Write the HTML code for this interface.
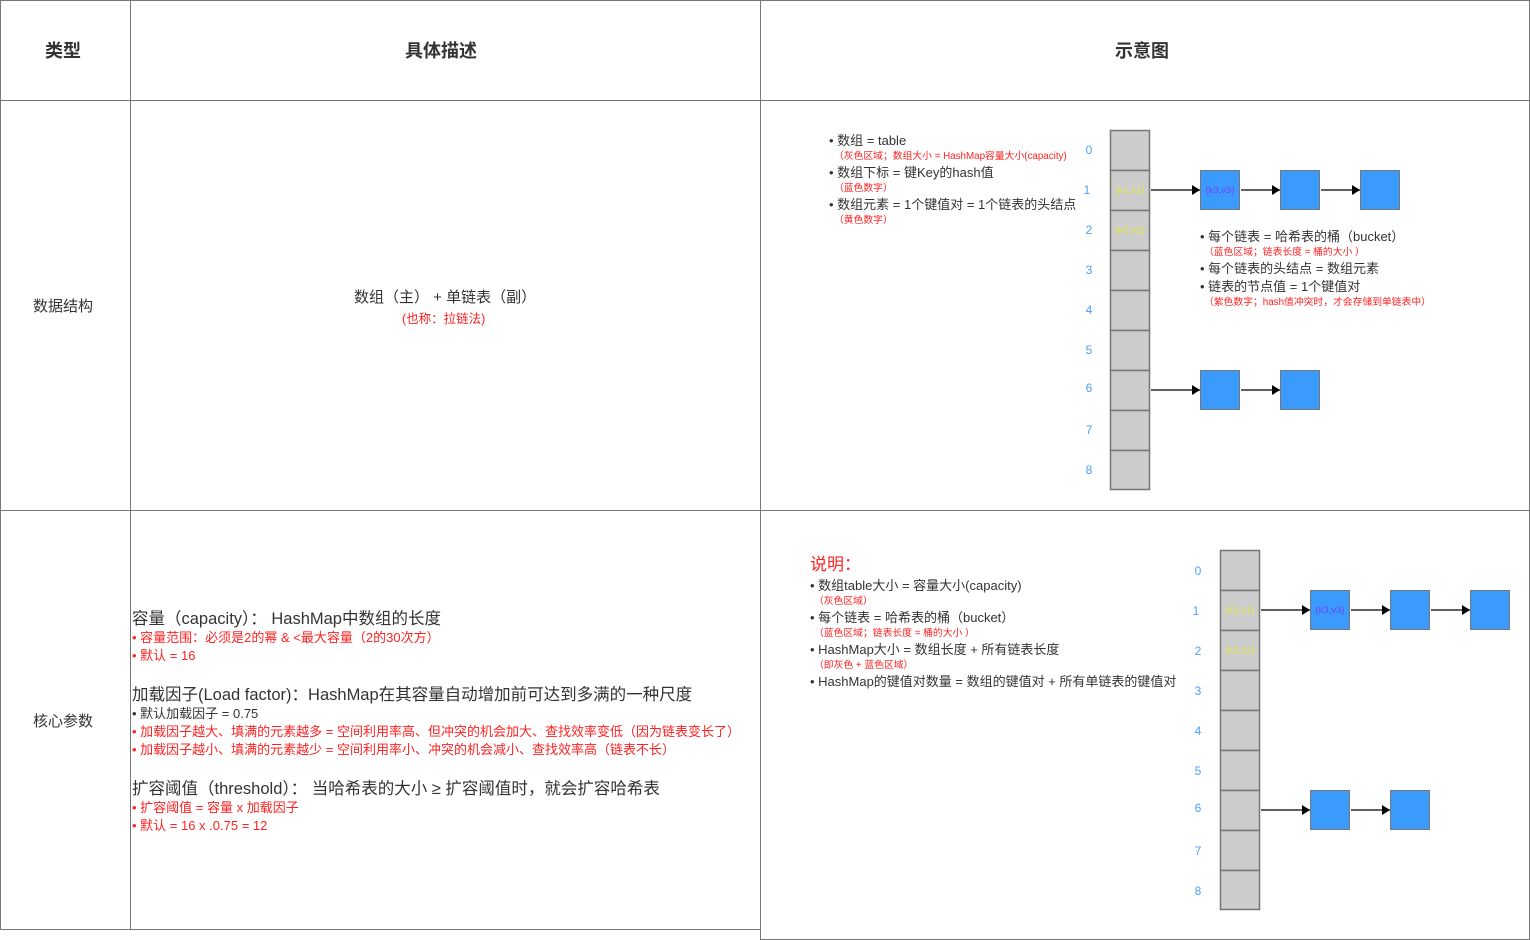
<!DOCTYPE html>
<html><head><meta charset="utf-8"><style>
*{margin:0;padding:0;box-sizing:border-box}
body{width:1530px;height:940px;background:#fff;position:relative;overflow:hidden;font-family:"Liberation Sans","Noto Sans CJK SC",sans-serif;color:#222}
.c{position:absolute;border:1px solid #777}
.t{position:absolute;white-space:nowrap}
.h{font-size:18px;font-weight:bold;color:#333}
.r{color:#f22}
.s{font-size:13px;color:#333}
.x{font-size:9.8px;color:#f22}
.b{font-size:15px;color:#333}
.m{font-size:13px}
.L{font-size:16.5px;color:#333}
</style></head><body>
<div class="c" style="left:0;top:0;width:131px;height:101px"></div>
<div class="c" style="left:130px;top:0;width:631px;height:101px"></div>
<div class="c" style="left:760px;top:0;width:770px;height:101px"></div>
<div class="c" style="left:0;top:100px;width:131px;height:411px"></div>
<div class="c" style="left:130px;top:100px;width:631px;height:411px"></div>
<div class="c" style="left:760px;top:100px;width:770px;height:411px"></div>
<div class="c" style="left:0;top:510px;width:131px;height:420px"></div>
<div class="c" style="left:130px;top:510px;width:631px;height:420px"></div>
<div class="c" style="left:760px;top:510px;width:770px;height:430px"></div>

<div class="t h" style="left:45px;top:37px">类型</div>
<div class="t h" style="left:405px;top:37px">具体描述</div>
<div class="t h" style="left:1115px;top:37px">示意图</div>
<div class="t b" style="left:33px;top:295px">数据结构</div>
<div class="t b" style="left:33px;top:710px">核心参数</div>

<div class="t b" style="left:354px;top:286px">数组（主） + 单链表（副）</div>
<div class="t r" style="left:402px;top:308px;font-size:12.5px">(也称：拉链法)</div>

<div class="t L" style="left:132px;top:605px">容量（capacity）： HashMap中数组的长度</div>
<div class="t r m" style="left:132px;top:627px">• 容量范围：必须是2的幂 &amp; &lt;最大容量（2的30次方）</div>
<div class="t r m" style="left:132px;top:645px">• 默认 = 16</div>
<div class="t L" style="left:132px;top:681px">加载因子(Load factor)：HashMap在其容量自动增加前可达到多满的一种尺度</div>
<div class="t m" style="left:132px;top:703px;color:#333">• 默认加载因子 = 0.75</div>
<div class="t r m" style="left:132px;top:721px">• 加载因子越大、填满的元素越多 = 空间利用率高、但冲突的机会加大、查找效率变低（因为链表变长了）</div>
<div class="t r m" style="left:132px;top:739px">• 加载因子越小、填满的元素越少 = 空间利用率小、冲突的机会减小、查找效率高（链表不长）</div>
<div class="t L" style="left:132px;top:775px">扩容阈值（threshold）： 当哈希表的大小 ≥ 扩容阈值时，就会扩容哈希表</div>
<div class="t r m" style="left:132px;top:797px">• 扩容阈值 = 容量 x 加载因子</div>
<div class="t r m" style="left:132px;top:815px">• 默认 = 16 x .0.75 = 12</div>

<div class="t s" style="left:829px;top:130px">• 数组 = table</div>
<div class="t x" style="left:834px;top:148px">（灰色区域；数组大小 = HashMap容量大小(capacity)</div>
<div class="t s" style="left:829px;top:162px">• 数组下标 = 键Key的hash值</div>
<div class="t x" style="left:834px;top:180px">（蓝色数字）</div>
<div class="t s" style="left:829px;top:194px">• 数组元素 = 1个键值对 = 1个链表的头结点</div>
<div class="t x" style="left:834px;top:212px">（黄色数字）</div>
<div class="t s" style="left:1200px;top:226px">• 每个链表 = 哈希表的桶（bucket）</div>
<div class="t x" style="left:1204px;top:244px">（蓝色区域；链表长度 = 桶的大小 ）</div>
<div class="t s" style="left:1200px;top:258px">• 每个链表的头结点 = 数组元素</div>
<div class="t s" style="left:1200px;top:276px">• 链表的节点值 = 1个键值对</div>
<div class="t x" style="left:1204px;top:294px">（紫色数字；hash值冲突时，才会存储到单链表中）</div>

<div class="t" style="left:810px;top:550px;font-size:17px;color:#f22">说明：</div>
<div class="t s" style="left:810px;top:575px">• 数组table大小 = 容量大小(capacity)</div>
<div class="t x" style="left:814px;top:593px">（灰色区域）</div>
<div class="t s" style="left:810px;top:607px">• 每个链表 = 哈希表的桶（bucket）</div>
<div class="t x" style="left:814px;top:625px">（蓝色区域；链表长度 = 桶的大小 ）</div>
<div class="t s" style="left:810px;top:639px">• HashMap大小 = 数组长度 + 所有链表长度</div>
<div class="t x" style="left:814px;top:657px">（即灰色 + 蓝色区域）</div>
<div class="t s" style="left:810px;top:671px">• HashMap的键值对数量 = 数组的键值对 + 所有单链表的键值对</div>

<svg style="position:absolute;left:0;top:0" width="1530" height="940" font-family="Liberation Sans, sans-serif">
<defs><marker id="a" markerWidth="8" markerHeight="10" refX="8" refY="5" orient="auto" markerUnits="userSpaceOnUse"><path d="M0,0 L8,5 L0,10 Z" fill="#000"/></marker></defs>
<g stroke="#777" stroke-width="1.5" fill="#ccc">
<rect x="1110.5" y="130.5" width="39" height="40"/><rect x="1110.5" y="170.5" width="39" height="40"/><rect x="1110.5" y="210.5" width="39" height="40"/><rect x="1110.5" y="250.5" width="39" height="40"/><rect x="1110.5" y="290.5" width="39" height="40"/><rect x="1110.5" y="330.5" width="39" height="40"/><rect x="1110.5" y="370.5" width="39" height="40"/><rect x="1110.5" y="410.5" width="39" height="40"/><rect x="1110.5" y="450.5" width="39" height="39"/>
<rect x="1220.5" y="550.5" width="39" height="40"/><rect x="1220.5" y="590.5" width="39" height="40"/><rect x="1220.5" y="630.5" width="39" height="40"/><rect x="1220.5" y="670.5" width="39" height="40"/><rect x="1220.5" y="710.5" width="39" height="40"/><rect x="1220.5" y="750.5" width="39" height="40"/><rect x="1220.5" y="790.5" width="39" height="40"/><rect x="1220.5" y="830.5" width="39" height="40"/><rect x="1220.5" y="870.5" width="39" height="39"/>
</g>
<g stroke="#777" stroke-width="1" fill="#3a9bfc">
<rect x="1200.5" y="170.5" width="39" height="39"/><rect x="1280.5" y="170.5" width="39" height="39"/><rect x="1360.5" y="170.5" width="39" height="39"/>
<rect x="1200.5" y="370.5" width="39" height="39"/><rect x="1280.5" y="370.5" width="39" height="39"/>
<rect x="1310.5" y="590.5" width="39" height="39"/><rect x="1390.5" y="590.5" width="39" height="39"/><rect x="1470.5" y="590.5" width="39" height="39"/>
<rect x="1310.5" y="790.5" width="39" height="39"/><rect x="1390.5" y="790.5" width="39" height="39"/>
</g>
<g stroke="#000" stroke-width="1.2" marker-end="url(#a)">
<line x1="1151" y1="190" x2="1200" y2="190"/><line x1="1241" y1="190" x2="1280" y2="190"/><line x1="1321" y1="190" x2="1360" y2="190"/>
<line x1="1151" y1="390" x2="1200" y2="390"/><line x1="1241" y1="390" x2="1280" y2="390"/>
<line x1="1261" y1="610" x2="1310" y2="610"/><line x1="1351" y1="610" x2="1390" y2="610"/><line x1="1431" y1="610" x2="1470" y2="610"/>
<line x1="1261" y1="810" x2="1310" y2="810"/><line x1="1351" y1="810" x2="1390" y2="810"/>
</g>
<g fill="#4aa0ff" font-size="12" text-anchor="middle">
<text x="1089" y="154">0</text><text x="1087" y="194">1</text><text x="1089" y="234">2</text><text x="1089" y="274">3</text><text x="1089" y="314">4</text><text x="1089" y="354">5</text><text x="1089" y="392">6</text><text x="1089" y="434">7</text><text x="1089" y="474">8</text>
<text x="1198" y="575">0</text><text x="1196" y="615">1</text><text x="1198" y="655">2</text><text x="1198" y="695">3</text><text x="1198" y="735">4</text><text x="1198" y="775">5</text><text x="1198" y="812">6</text><text x="1198" y="855">7</text><text x="1198" y="895">8</text>
</g>
<g font-size="9.5" text-anchor="middle">
<text x="1130" y="193" fill="#e8e840">(k1,v1)</text><text x="1130" y="233" fill="#e8e840">(k2,v2)</text><text x="1220" y="193" fill="#7a3cff">(k3,v3)</text>
<text x="1240" y="613" fill="#e8e840">(k1,v1)</text><text x="1240" y="653" fill="#e8e840">(k2,v2)</text><text x="1330" y="613" fill="#7a3cff">(k3,v3)</text>
</g>
</svg>
</body></html>
